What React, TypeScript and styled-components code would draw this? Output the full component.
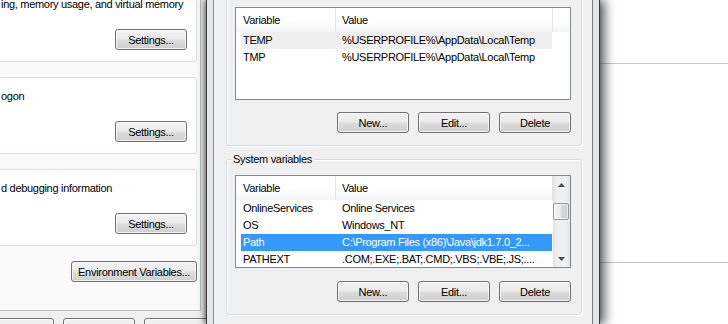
import React from 'react'
import styled, { createGlobalStyle } from 'styled-components'

const GlobalStyle = createGlobalStyle`
    html, body {
        margin: 0;
        padding: 0;
        background: #ffffff;
    }
    body {
        font-family: "Liberation Sans", Arial, sans-serif;
        font-size: 11px;
        letter-spacing: -0.3px;
        color: #000000;
    }
    * {
        box-sizing: border-box;
    }
`

/* page */
const Screen = styled.div`
    width: 728px;
    height: 324px;
    display: flex;
    overflow: hidden;
`

/* System Properties window, behind */
const BackDialog = styled.div`
    width: 206px;
    flex: none;
    background: #f0f0f0;
    overflow: hidden;
    display: flex;
    flex-direction: column;
`

const TabPage = styled.div`
    width: 213px;
    height: 311px;
    flex: none;
    margin-left: -12px;
    padding: 0 3px 0 6px;
    background: #fafafa;
    border-right: 1px solid #b9bec5;
    border-bottom: 1px solid #b9bec5;
    display: flex;
    flex-direction: column;
    gap: 15px;
`

const SettingsGroup = styled.div`
    height: 77px;
    flex: none;
    background: #ffffff;
    border: 1px solid #d9dee3;
    border-radius: 3px;
    padding: 11px 9px 0 6px;
    display: flex;
    flex-direction: column;

    &:first-child {
        margin-top: -15px;
    }
`

const GroupText = styled.div`
    line-height: 14px;
    white-space: nowrap;
`

const ActionRow = styled.div<{ $top: number }>`
    display: flex;
    justify-content: flex-end;
    gap: 9px;
    margin-top: ${({ $top }) => $top}px;
`

const DialogButtons = styled.div`
    display: flex;
    gap: 9px;
    margin: 7px 0 0 -18px;
`

const Button = styled.button<{ $width: number }>`
    width: ${({ $width }) => $width}px;
    height: 21px;
    flex: none;
    padding: 0;
    border: 1px solid #707070;
    border-radius: 3px;
    background: linear-gradient(#f2f2f2 0%, #ebebeb 48%, #dddddd 52%, #cfcfcf 100%);
    box-shadow: inset 0 0 0 1px rgba(255, 255, 255, 0.7);
    font: inherit;
    letter-spacing: inherit;
    color: #000000;
    white-space: nowrap;
`

/* Environment Variables window */
const EnvWindow = styled.div`
    width: 394px;
    flex: none;
    position: relative;
    z-index: 1;
    display: flex;
    padding: 0 6px;
    border-left: 1px solid #3a3a3a;
    border-right: 1px solid #3a3a3a;
    background: #e3e5e8;
    box-shadow: 5px 0 10px rgba(0, 0, 0, 0.6), -2px 0 6px rgba(0, 0, 0, 0.5);
`

const EnvBody = styled.div`
    flex: 1;
    display: flex;
    flex-direction: column;
    padding: 0 10px 0 12px;
    background: #f0f0f0;
    border-left: 1px solid #8c8c8c;
    border-right: 1px solid #7a7a7a;
`

const VarGroup = styled.div<{ $top: number; $padTop: number }>`
    margin-top: ${({ $top }) => $top}px;
    padding: ${({ $padTop }) => $padTop}px 10px 12px 8px;
    border: 1px solid #d5dfe5;
    border-radius: 3px;
    box-shadow: inset 1px 1px 0 #ffffff, 1px 1px 0 #ffffff;
    display: flex;
    flex-direction: column;
`

const GroupCaption = styled.div`
    align-self: flex-start;
    margin: -7px 0 9px -4px;
    padding: 0 2px;
    line-height: 13px;
    background: #f0f0f0;
`

const ListView = styled.div`
    height: 93px;
    flex: none;
    display: flex;
    overflow: hidden;
    background: #ffffff;
    border: 1px solid #828790;
`

const ListMain = styled.div`
    flex: 1;
    min-width: 0;
    display: flex;
    flex-direction: column;
`

const HeaderRow = styled.div`
    height: 24px;
    flex: none;
    display: flex;
    background: linear-gradient(#ffffff 0%, #ffffff 55%, #f4f5f7 100%);
`

const HeaderCell = styled.div<{ $width: number; $pad: number }>`
    width: ${({ $width }) => $width}px;
    flex: none;
    padding-left: ${({ $pad }) => $pad}px;
    line-height: 25px;
    border-right: 1px solid #e3e5e8;
`

const HeaderFill = styled.div`
    flex: 1;
`

const Row = styled.div<{ $state?: 'inactive' | 'selected' }>`
    width: 311px;
    height: 17px;
    flex: none;
    margin-left: 5px;
    display: flex;
    line-height: 17px;
    white-space: nowrap;
    background: ${({ $state }) => $state === 'selected' ? '#3399ff' : $state === 'inactive' ? '#efefef' : 'transparent'};
    color: ${({ $state }) => $state === 'selected' ? '#ffffff' : '#000000'};
`

const NameCell = styled.div`
    width: 99px;
    flex: none;
    padding-left: 2px;
    overflow: hidden;
`

const ValueCell = styled.div`
    flex: 1;
    min-width: 0;
    padding-left: 2px;
    overflow: hidden;
`

const ScrollBar = styled.div`
    width: 17px;
    flex: none;
    display: flex;
    flex-direction: column;
    background: linear-gradient(90deg, #e2e2e2 0%, #f0f0f0 25%, #f0f0f0 75%, #e6e6e6 100%);
`

const ScrollArrow = styled.div`
    height: 17px;
    flex: none;
    display: flex;
    align-items: center;
    justify-content: center;
`

const ScrollTrack = styled.div`
    flex: 1;
`

const ScrollThumb = styled.div`
    height: 17px;
    margin: 10px 1px 0 0;
    border: 1px solid #979797;
    border-radius: 2px;
    background: linear-gradient(90deg, #f4f4f4 0%, #e9e9e9 50%, #d8d8d8 51%, #cfcfcf 100%);
    box-shadow: inset 0 0 0 1px rgba(255, 255, 255, 0.6);
`

/* desktop window on the right */
const Backdrop = styled.div`
    flex: 1;
    display: flex;
    flex-direction: column;
    background: #ffffff;
`

const BackdropBand = styled.div<{ $height: number }>`
    height: ${({ $height }) => $height}px;
    flex: none;
    border-bottom: 1px solid #c8c8c8;
`

type Variable = { name: string; value: string; state?: 'inactive' | 'selected' }

const userVars: Variable[] = [
    { name: 'TEMP', value: '%USERPROFILE%\\AppData\\Local\\Temp', state: 'inactive' },
    { name: 'TMP', value: '%USERPROFILE%\\AppData\\Local\\Temp' },
]

const systemVars: Variable[] = [
    { name: 'OnlineServices', value: 'Online Services' },
    { name: 'OS', value: 'Windows_NT' },
    { name: 'Path', value: 'C:\\Program Files (x86)\\Java\\jdk1.7.0_2...', state: 'selected' },
    { name: 'PATHEXT', value: '.COM;.EXE;.BAT;.CMD;.VBS;.VBE;.JS;....' },
]

const settingsGroups = [
    'ing, memory usage, and virtual memory',
    'ogon',
    'd debugging information',
]

const Arrow = ({ up }: { up: boolean }) => (
    <svg width="7" height="4" viewBox="0 0 7 4">
        <polygon points={up ? '0,4 7,4 3.5,0' : '0,0 7,0 3.5,4'} fill="#4a4a4a" />
    </svg>
)

const VariableList = ({ items, scroll }: { items: Variable[]; scroll?: boolean }) => (
    <ListView>
        <ListMain>
            <HeaderRow>
                <HeaderCell $width={100} $pad={7}>Variable</HeaderCell>
                <HeaderCell $width={217} $pad={6}>Value</HeaderCell>
                <HeaderFill />
            </HeaderRow>
            { items.map(item => (
                <Row key={item.name} $state={item.state}>
                    <NameCell>{ item.name }</NameCell>
                    <ValueCell>{ item.value }</ValueCell>
                </Row>
            )) }
        </ListMain>
        { scroll && (
            <ScrollBar>
                <ScrollArrow><Arrow up /></ScrollArrow>
                <ScrollTrack><ScrollThumb /></ScrollTrack>
                <ScrollArrow><Arrow up={false} /></ScrollArrow>
            </ScrollBar>
        ) }
    </ListView>
)

const VariableButtons = ({ top }: { top: number }) => (
    <ActionRow $top={top}>
        <Button $width={72}>New...</Button>
        <Button $width={72}>Edit...</Button>
        <Button $width={72}>Delete</Button>
    </ActionRow>
)

export default function App() {
    return (
        <>
            <GlobalStyle />
            <Screen>
                <BackDialog>
                    <TabPage>
                        { settingsGroups.map(text => (
                            <SettingsGroup key={text}>
                                <GroupText>{ text }</GroupText>
                                <ActionRow $top={18}>
                                    <Button $width={72}>Settings...</Button>
                                </ActionRow>
                            </SettingsGroup>
                        )) }
                        <ActionRow $top={0}>
                            <Button $width={126}>Environment Variables...</Button>
                        </ActionRow>
                    </TabPage>
                    <DialogButtons>
                        <Button $width={72}>OK</Button>
                        <Button $width={72}>Cancel</Button>
                        <Button $width={72}>Apply</Button>
                    </DialogButtons>
                </BackDialog>

                <EnvWindow>
                    <EnvBody>
                        <VarGroup $top={-14} $padTop={20}>
                            <VariableList items={userVars} />
                            <VariableButtons top={12} />
                        </VarGroup>
                        <VarGroup $top={13} $padTop={0}>
                            <GroupCaption>System variables</GroupCaption>
                            <VariableList items={systemVars} scroll />
                            <VariableButtons top={13} />
                        </VarGroup>
                    </EnvBody>
                </EnvWindow>

                <Backdrop>
                    <BackdropBand $height={64} />
                    <BackdropBand $height={199} />
                </Backdrop>
            </Screen>
        </>
    )
}
